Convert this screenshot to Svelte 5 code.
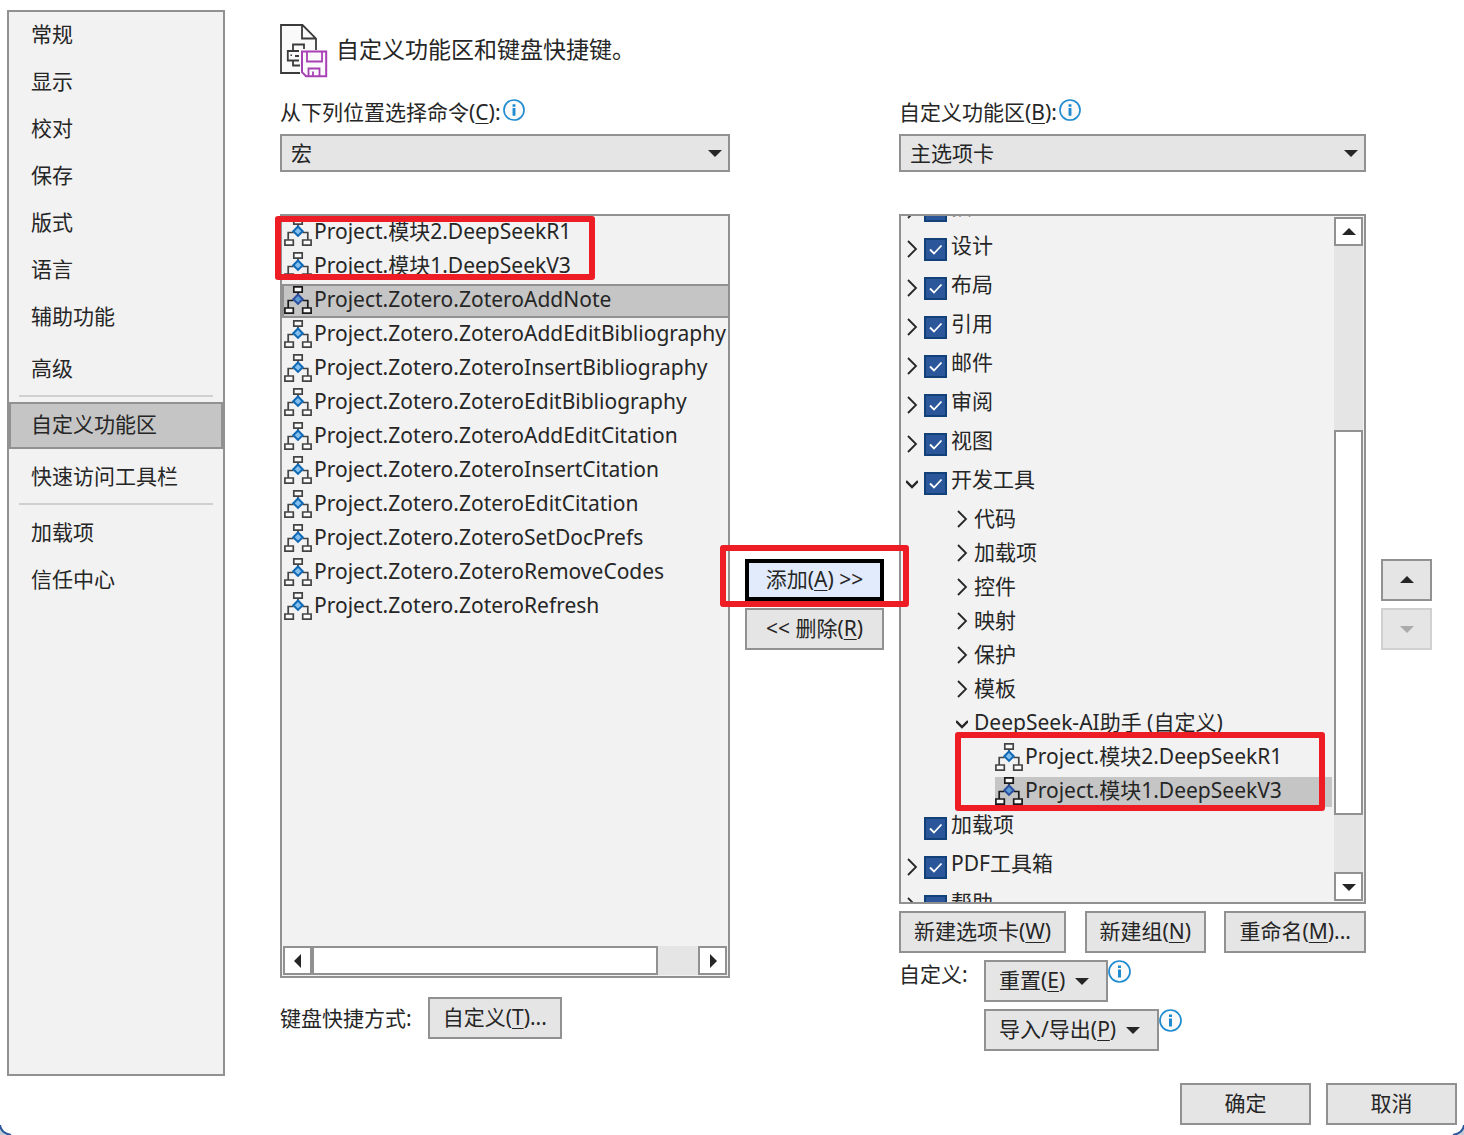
<script lang="ts">
  type Page = { label: string; gap?: boolean; line?: boolean };

  const pages: Page[] = [
    { label: "常规" },
    { label: "显示" },
    { label: "校对" },
    { label: "保存" },
    { label: "版式" },
    { label: "语言" },
    { label: "辅助功能" },
    { label: "高级", gap: true, line: true },
    { label: "自定义功能区" },
    { label: "快速访问工具栏", gap: true, line: true },
    { label: "加载项" },
    { label: "信任中心" },
  ];

  const macros = [
    "Project.模块2.DeepSeekR1",
    "Project.模块1.DeepSeekV3",
    "Project.Zotero.ZoteroAddNote",
    "Project.Zotero.ZoteroAddEditBibliography",
    "Project.Zotero.ZoteroInsertBibliography",
    "Project.Zotero.ZoteroEditBibliography",
    "Project.Zotero.ZoteroAddEditCitation",
    "Project.Zotero.ZoteroInsertCitation",
    "Project.Zotero.ZoteroEditCitation",
    "Project.Zotero.ZoteroSetDocPrefs",
    "Project.Zotero.ZoteroRemoveCodes",
    "Project.Zotero.ZoteroRefresh",
  ];

  const groups = ["代码", "加载项", "控件", "映射", "保护", "模板"];
  const custom = ["Project.模块2.DeepSeekR1", "Project.模块1.DeepSeekV3"];

  let tabs = $state([
    { label: "插入", checked: true, arrow: true, open: false },
    { label: "设计", checked: true, arrow: true, open: false },
    { label: "布局", checked: true, arrow: true, open: false },
    { label: "引用", checked: true, arrow: true, open: false },
    { label: "邮件", checked: true, arrow: true, open: false },
    { label: "审阅", checked: true, arrow: true, open: false },
    { label: "视图", checked: true, arrow: true, open: false },
    { label: "开发工具", checked: true, arrow: true, open: true },
    { label: "加载项", checked: true, arrow: false, open: false },
    { label: "PDF工具箱", checked: true, arrow: true, open: false },
    { label: "帮助", checked: true, arrow: true, open: false },
  ]);

  let page = $state("自定义功能区");
  let macro = $state("Project.Zotero.ZoteroAddNote");
  let command = $state("Project.模块1.DeepSeekV3");
</script>

{#snippet info()}
  <svg class="info" viewBox="0 0 23 23" aria-hidden="true">
    <circle cx="11.5" cy="11.5" r="10.5" fill="#fafafa" stroke="#1e8bd0" stroke-width="1.7" />
    <path d="M10 5.5h3v2.5h-3zM10 9.5h3v8h-3z" fill="#1e8bd0" />
  </svg>
{/snippet}

{#snippet flow(dark: boolean)}
  <svg class="flow" viewBox="0 0 28 28" aria-hidden="true">
    <g fill="none" stroke={dark ? "#1a1a1a" : "#444"} stroke-width="1.7">
      <path d="M14 7v3M9.5 14.5H4.2V22M18.5 14.5H23.8V22" />
      <path d="M9.8 .9h8.4v5.2h-8.4zM.9 22h8.4v5.2H.9zM18.7 22h8.4v5.2h-8.4z" fill="#fafafa" />
    </g>
    <path d="M14 8.5l4.7 4.7-4.7 4.7-4.7-4.7z" fill={dark ? "#5b9bd5" : "#83beec"} stroke={dark ? "#2b4f9e" : "#0f68b5"} stroke-width="2" />
  </svg>
{/snippet}

{#snippet chevron(open: boolean)}
  <svg class="chevron" viewBox="0 0 12 18" aria-hidden="true">
    {#if open}
      <path d="M0 7l6 6 6-6" fill="none" stroke="#262626" stroke-width="2.4" />
    {:else}
      <path d="M2 1l8 8-8 8" fill="none" stroke="#262626" stroke-width="1.8" />
    {/if}
  </svg>
{/snippet}

{#snippet triangle(direction: string)}
  <svg class="triangle {direction}" viewBox="0 0 14 14" aria-hidden="true">
    <path d="M0 4h14l-7 7z" fill="currentColor" />
  </svg>
{/snippet}

<div class="dialog">
  <nav>
    {#each pages as item}
      <button
        class="page"
        class:gap={item.gap}
        class:active={item.label === page}
        onclick={() => (page = item.label)}>{item.label}</button
      >
      {#if item.line}<hr />{/if}
    {/each}
  </nav>

  <main>
    <header>
      <svg class="logo" viewBox="0 0 48 54" aria-hidden="true">
        <path d="M1 1h22l13 13v36H1z" fill="#fafafa" />
        <path d="M20 49H1V1h21.5L36 14.5V26M22 1v13.5h14" fill="none" stroke="#3b3b3b" stroke-width="1.8" />
        <path d="M13 27v-6.5h11V25M19 27H7.8v9.5H13M13 36v5.5h7M13 36.5h6M19 32h-4" fill="none" stroke="#3b3b3b" stroke-width="1.8" />
        <path d="M10.5 30.5h1.5v1.5h-1.5z" fill="#3b3b3b" />
        <path d="M20 26h28v28H20z" fill="#fff" />
        <path d="M22 27.5h24.2v24.7H26l-4-4z" fill="#fafafa" stroke="#a83fb5" stroke-width="2" />
        <path d="M27 28v9.5h15V28M28.5 52v-7.5h11V52M33 47.5V52" fill="none" stroke="#a83fb5" stroke-width="1.8" />
      </svg>
      <h1>自定义功能区和键盘快捷键。</h1>
    </header>

    <div class="columns">
      <section class="column">
        <div class="caption">
          <label for="source">从下列位置选择命令(<u>C</u>):</label>
          {@render info()}
        </div>
        <div class="picker">
          <select id="source"><option>宏</option></select>
          {@render triangle("down")}
        </div>
        <div class="pane-wrap">
          <div class="pane stacked">
            <ul class="macros">
              {#each macros as name}
                <li>
                  <button class="macro" class:active={name === macro} onclick={() => (macro = name)}>
                    {@render flow(name === macro)}{name}
                  </button>
                </li>
              {/each}
            </ul>
            <div class="scrollbar horizontal">
              <button aria-label="向左">{@render triangle("left")}</button>
              <div class="thumb" style="flex-grow: 346"></div>
              <div style="flex-grow: 40"></div>
              <button aria-label="向右">{@render triangle("right")}</button>
            </div>
          </div>
          <div class="mark mark-source"></div>
        </div>
        <div class="shortcuts">
          <span>键盘快捷方式:</span>
          <button class="btn">自定义(<u>T</u>)...</button>
        </div>
      </section>

      <div class="side">
        <div class="transfer">
          <button class="btn primary">添加(<u>A</u>) &gt;&gt;</button>
          <div class="mark mark-add"></div>
        </div>
        <button class="btn">&lt;&lt; 删除(<u>R</u>)</button>
      </div>

      <section class="column">
        <div class="caption">
          <label for="ribbon">自定义功能区(<u>B</u>):</label>
          {@render info()}
        </div>
        <div class="picker">
          <select id="ribbon"><option>主选项卡</option></select>
          {@render triangle("down")}
        </div>
        <div class="pane">
          <ul class="tree">
            {#each tabs as tab}
              <li>
                <label class="tab">
                  <span class="twist">
                    {#if tab.arrow}{@render chevron(tab.open)}{/if}
                  </span>
                  <span class="check">
                    <input type="checkbox" bind:checked={tab.checked} />
                    {#if tab.checked}
                      <svg viewBox="0 0 23 23" aria-hidden="true">
                        <path d="M6 11.5l4 4 7.5-8" fill="none" stroke="#fff" stroke-width="1.8" />
                      </svg>
                    {/if}
                  </span>
                  {tab.label}
                </label>
                {#if tab.open}
                  <ul>
                    {#each groups as group}
                      <li class="group">{@render chevron(false)}{group}</li>
                    {/each}
                    <li>
                      <div class="group">{@render chevron(true)}DeepSeek-AI助手 (自定义)</div>
                      <ul class="custom">
                        {#each custom as name}
                          <li>
                            <button class="command" class:active={name === command} onclick={() => (command = name)}>
                              {@render flow(name === command)}{name}
                            </button>
                          </li>
                        {/each}
                      </ul>
                    </li>
                  </ul>
                {/if}
              </li>
            {/each}
          </ul>
          <div class="scrollbar vertical">
            <button aria-label="向上">{@render triangle("up")}</button>
            <div style="flex-grow: 185"></div>
            <div class="thumb" style="flex-grow: 384"></div>
            <div style="flex-grow: 57"></div>
            <button aria-label="向下">{@render triangle("down")}</button>
          </div>
        </div>
        <div class="actions">
          <button class="btn">新建选项卡(<u>W</u>)</button>
          <button class="btn">新建组(<u>N</u>)</button>
          <button class="btn">重命名(<u>M</u>)...</button>
        </div>
        <div class="customize">
          <span>自定义:</span>
          <div class="menus">
            <div class="menu">
              <button class="btn">重置(<u>E</u>) {@render triangle("down")}</button>
              {@render info()}
            </div>
            <div class="menu">
              <button class="btn">导入/导出(<u>P</u>) {@render triangle("down")}</button>
              {@render info()}
            </div>
          </div>
        </div>
      </section>

      <div class="side">
        <button class="btn" aria-label="上移">{@render triangle("up")}</button>
        <button class="btn" aria-label="下移" disabled>{@render triangle("down")}</button>
      </div>
    </div>
  </main>

  <footer>
    <button class="btn">确定</button>
    <button class="btn">取消</button>
  </footer>

  <svg class="corner" viewBox="0 0 12 12" aria-hidden="true">
    <path d="M0 2q1 8 10 10H0z" fill="#c4ccd6" />
    <path d="M0 2q1 8 11 10" fill="none" stroke="#2b579a" stroke-width="2" />
  </svg>
  <svg class="corner end" viewBox="0 0 12 12" aria-hidden="true">
    <path d="M0 2q1 8 10 10H0z" fill="#c4ccd6" />
    <path d="M0 2q1 8 11 10" fill="none" stroke="#2b579a" stroke-width="2" />
  </svg>
</div>

<style>
  :global(body) {
    background: #fff;
  }

  .dialog,
  .dialog * {
    box-sizing: border-box;
  }

  .dialog {
    position: relative;
    display: grid;
    grid-template-columns: 218px minmax(0, 1fr);
    grid-template-rows: 1fr auto;
    min-height: 100vh;
    padding: 10px 7px;
    overflow: hidden;
    color: #262626;
    font-family: "Noto Sans", "Noto Sans CJK SC", sans-serif;
    font-size: 21px;
    line-height: 28px;
  }

  button,
  select {
    color: inherit;
    font: inherit;
    border-radius: 0;
    margin: 0;
  }

  ul {
    list-style: none;
    margin: 0;
    padding: 0;
  }

  u {
    text-decoration-thickness: 1px;
    text-underline-offset: 3px;
  }

  nav {
    display: flex;
    flex-direction: column;
    background: #f2f2f2;
    border: 2px solid #919191;
  }

  .page {
    height: 47px;
    padding: 0 20px 4px;
    text-align: left;
    background: none;
    border: 2px solid transparent;
  }

  .page.gap {
    margin-top: 5px;
  }

  .page.active {
    background: #c5c5c5;
    border-color: #919191;
  }

  hr {
    width: auto;
    height: 2px;
    margin: 2px 10px 5px;
    border: none;
    background: #d0d0d0;
  }

  main {
    display: flex;
    flex-direction: column;
    padding: 14px 25px 0 55px;
  }

  header {
    display: flex;
    align-items: center;
    gap: 8px;
    margin-bottom: 21px;
  }

  .logo {
    width: 48px;
    height: 54px;
  }

  h1 {
    margin: 0;
    padding-bottom: 4px;
    font-size: 23px;
    font-weight: 400;
  }

  .columns {
    flex: 1;
    display: grid;
    grid-template-columns: minmax(0, 450fr) 139px minmax(0, 467fr) 51px;
    gap: 15px;
  }

  .column {
    display: flex;
    flex-direction: column;
    padding-bottom: 25px;
  }

  .caption {
    display: flex;
    gap: 2px;
    margin-bottom: 9px;
    line-height: 26px;
  }

  .info {
    flex: none;
    width: 23px;
    height: 23px;
  }

  .caption .info {
    width: 22px;
    height: 22px;
  }

  .picker {
    display: grid;
    align-items: center;
    margin-bottom: 42px;
  }

  .picker > :global(*) {
    grid-area: 1 / 1;
  }

  .picker .triangle {
    justify-self: end;
    margin-right: 8px;
    pointer-events: none;
  }

  select {
    appearance: none;
    width: 100%;
    height: 38px;
    padding: 0 9px;
    background: #e5e5e5;
    border: 2px solid #919191;
  }

  .triangle {
    flex: none;
    width: 14px;
    height: 14px;
  }

  .up {
    transform: rotate(180deg);
  }

  .left {
    transform: rotate(90deg);
  }

  .right {
    transform: rotate(-90deg);
  }

  .pane-wrap {
    position: relative;
    flex: 1;
    display: flex;
    min-height: 0;
  }

  .pane {
    flex: 1 1 0;
    display: flex;
    min-width: 0;
    min-height: 0;
    overflow: hidden;
    background: #f2f2f2;
    border: 2px solid #919191;
  }

  .stacked {
    flex-direction: column;
  }

  .macros {
    flex: 1;
    overflow: hidden;
  }

  .macro,
  .command {
    display: flex;
    gap: 2px;
    width: 100%;
    padding: 0;
    line-height: 26px;
    white-space: nowrap;
    background: none;
    border: none;
  }

  .macro {
    height: 34px;
    border: 2px solid transparent;
    border-right: none;
  }

  .active {
    background: #c5c5c5;
    border-color: #919191;
  }

  .flow {
    flex: none;
    width: 28px;
    height: 28px;
  }

  .scrollbar {
    display: flex;
    flex: none;
    margin: 1px;
    background: #e5e5e5;
  }

  .scrollbar button {
    display: grid;
    place-items: center;
    flex: none;
    width: 29px;
    height: 29px;
    padding: 0;
    background: #fff;
    border: 2px solid #919191;
  }

  .vertical {
    flex-direction: column;
  }

  .thumb {
    background: #fff;
    border: 2px solid #919191;
  }

  .tree {
    flex: 1;
    height: 0;
    margin-top: -26px;
  }

  .tab {
    display: flex;
    gap: 4px;
    height: 39px;
    padding-left: 5px;
    line-height: 32px;
  }

  .twist {
    display: flex;
    width: 14px;
    padding-top: 11px;
  }

  .chevron {
    flex: none;
    width: 12px;
    height: 18px;
  }

  .check {
    display: grid;
    width: 23px;
    height: 23px;
    margin-top: 9px;
  }

  .check > :global(*) {
    grid-area: 1 / 1;
  }

  .check svg {
    pointer-events: none;
  }

  input {
    appearance: none;
    width: 23px;
    height: 23px;
    margin: 0;
    border: 2px solid #124078;
  }

  input:checked {
    background: #2b579a;
  }

  .group {
    display: flex;
    gap: 6px;
    height: 34px;
    padding-left: 55px;
    line-height: 32px;
    white-space: nowrap;
  }

  .group .chevron {
    margin-top: 8px;
  }

  .custom {
    position: relative;
    margin: 0 1px 0 94px;
  }

  .custom li {
    height: 34px;
    padding-top: 3px;
  }

  .command {
    height: 30px;
  }

  .custom::after {
    content: "";
    position: absolute;
    inset: -8px 7px -3px -40px;
    border: 6px solid #ee1c25;
    border-radius: 3px;
    pointer-events: none;
  }

  .mark {
    position: absolute;
    border: 6px solid #ee1c25;
    border-radius: 3px;
    pointer-events: none;
  }

  .mark-source {
    top: 2px;
    left: -5px;
    width: 320px;
    height: 64px;
  }

  .mark-add {
    inset: -14px -25px -6px;
  }

  .btn {
    height: 42px;
    padding: 0 13px 2px;
    white-space: nowrap;
    background: #e5e5e5;
    border: 2px solid #919191;
  }

  .btn:disabled {
    color: #ababab;
    border-color: #d0d0d0;
  }

  .primary {
    width: 100%;
    background: #e1ebfc;
    border: 4px solid #000;
  }

  .side {
    display: flex;
    flex-direction: column;
    justify-content: center;
    gap: 7px;
    padding-top: 34px;
  }

  .side .btn {
    padding: 0 0 2px;
  }

  .transfer {
    position: relative;
    display: flex;
    z-index: 1;
  }

  .shortcuts {
    display: flex;
    align-items: center;
    gap: 16px;
    margin: 19px 0 12px;
  }

  .actions {
    display: flex;
    justify-content: space-between;
    margin: 7px 0;
  }

  .customize {
    display: flex;
  }

  .customize > span {
    width: 85px;
  }

  .menus {
    display: flex;
    flex-direction: column;
    gap: 7px;
  }

  .menu {
    display: flex;
  }

  .menu .triangle {
    margin: 0 4px;
  }

  footer {
    grid-column: 1 / -1;
    display: flex;
    justify-content: flex-end;
    gap: 15px;
    padding-top: 7px;
  }

  footer .btn {
    width: 131px;
  }

  .corner {
    position: absolute;
    bottom: 0;
    left: 0;
    width: 12px;
    height: 12px;
  }

  .corner.end {
    right: 0;
    left: auto;
    transform: scaleX(-1);
  }
</style>
